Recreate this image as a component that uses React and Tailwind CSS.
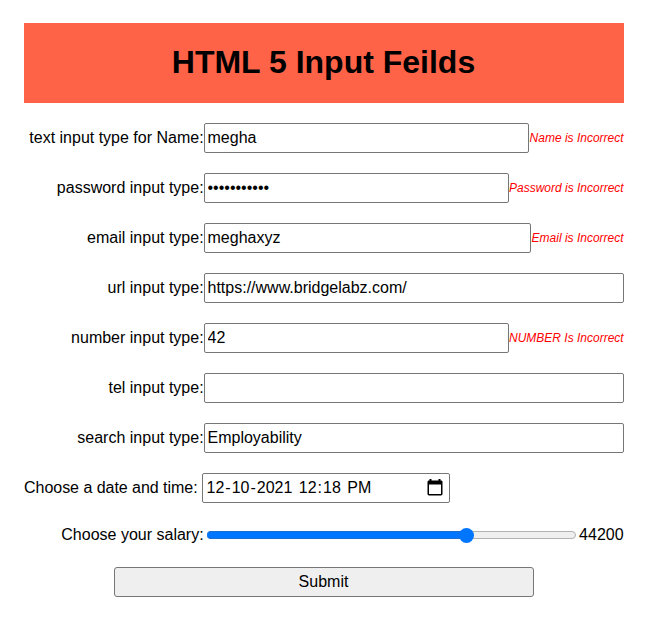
const fields = [
  { label: 'text input type for Name:', type: 'text', value: 'megha', width: 'w-[325px]', error: 'Name is Incorrect' },
  { label: 'password input type:', type: 'password', value: 'megha123456', width: 'w-[305px]', error: 'Password is Incorrect' },
  { label: 'email input type:', type: 'email', value: 'meghaxyz', width: 'w-[327px]', error: 'Email is Incorrect' },
  { label: 'url input type:', type: 'url', value: 'https://www.bridgelabz.com/', width: 'w-[420px]' },
  { label: 'number input type:', type: 'text', value: '42', width: 'w-[305px]', error: 'NUMBER Is Incorrect' },
  { label: 'tel input type:', type: 'tel', value: '', width: 'w-[420px]' },
  { label: 'search input type:', type: 'text', value: 'Employability', width: 'w-[420px]' },
];

const dateParts = ['12', '-', '10', '-', '2021', ' ', '12', ':', '18', ' ', 'PM'];

const box = 'h-[30px] rounded-[2px] border border-[#767676]';

function Label({ children }) {
  return <label className="w-[180px] shrink-0 whitespace-nowrap pr-[0.4px] text-right">{children}</label>;
}

function Field({ label, type, value, width, error }) {
  return (
    <div className="flex h-[30px] items-center">
      <Label>{label}</Label>
      <input type={type} defaultValue={value} className={`${box} ${width} shrink-0 bg-white px-[2.5px] outline-none`} />
      {error && (
        <output className="flex-1 whitespace-nowrap pr-[0.4px] text-right text-xs italic text-[#ff0000]">{error}</output>
      )}
    </div>
  );
}

function CalendarIcon() {
  return (
    <svg width="16" height="18" viewBox="0 0 16 18" fill="none" aria-hidden="true">
      <path fill="#000" d="M2.5 0h2v1.5h7V0h2v1.5H14c.8 0 1.5.6 1.5 1.4v12.2c0 .8-.7 1.4-1.5 1.4H2C1.200 16.500.5 15.900.5 15.100V2.900C.5 2.100 1.200 1.500 2 1.500h.5zM2 5.500v9.500h12V5.500z" />
    </svg>
  );
}

export default function App() {
  return (
    <main className="h-[640px] w-[652px] bg-white px-6 pt-[23px] font-['Liberation_Sans',Arial,sans-serif] text-base leading-[18px] text-black">
      <form className="w-[600px]" onSubmit={(e) => e.preventDefault()}>
        <h1 className="flex h-20 items-center justify-center bg-[#ff6347] pb-0.5 pr-px text-[32px] font-bold leading-9">
          HTML 5 Input Feilds
        </h1>
        <div className="mt-5 flex flex-col gap-5">
          {fields.map((field) => (
            <Field key={field.label} {...field} />
          ))}
          <div className="flex h-[30px] items-center">
            <label className="w-[178px] shrink-0 whitespace-nowrap tracking-[-0.03px]">Choose a date and time:</label>
            <div className={`${box} flex w-[248px] items-center justify-between pl-[2.5px] pr-1.5`}>
              <span className="flex whitespace-pre">
                {dateParts.map((part, i) => (
                  <span key={i} className={i % 2 === 0 ? 'px-px' : ''}>{part}</span>
                ))}
              </span>
              <CalendarIcon />
            </div>
          </div>
        </div>
        <div className="mt-[22px] flex h-5 items-center">
          <Label>Choose your salary:</Label>
          <div className="ml-[3px] flex h-2 w-[369px] shrink-0 items-center rounded-full border border-[#b2b2b2] bg-[#efefef]">
            <div className="-ml-px h-2 w-[260px] rounded-l-full border-y border-[#1a6fd0] bg-[#0075ff]" />
            <div className="-ml-2 size-[15px] shrink-0 rounded-full bg-[#0075ff]" />
          </div>
          <output className="flex-1 pr-[0.4px] text-right">44200</output>
        </div>
        <button className="ml-[90px] mt-[22px] block h-[30px] w-[420px] rounded-[3px] border border-[#767676] bg-[#efefef] pr-px">
          Submit
        </button>
      </form>
    </main>
  );
}
